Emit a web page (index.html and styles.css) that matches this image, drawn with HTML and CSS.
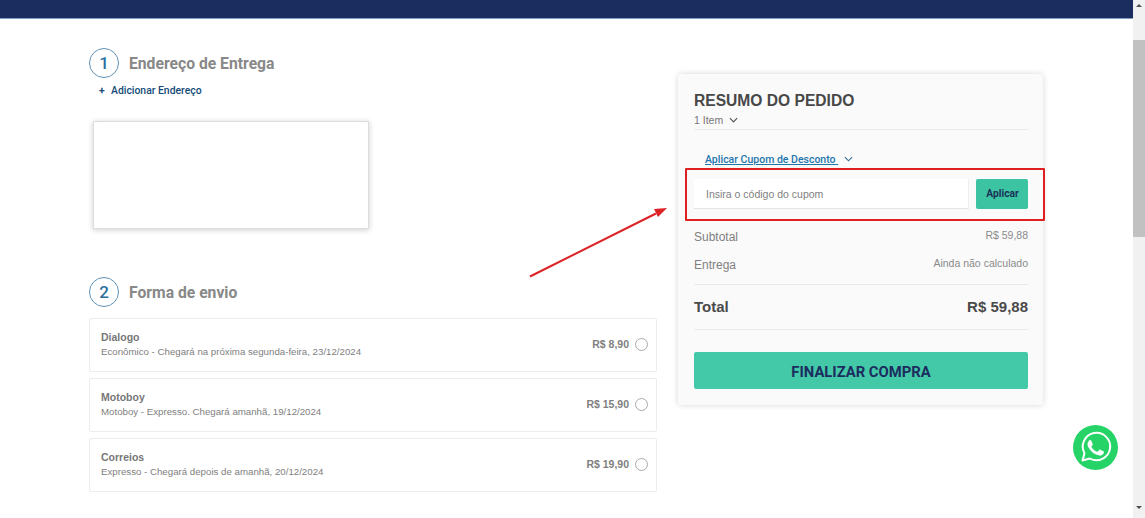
FILE: index.html
```html
<!DOCTYPE html>
<html lang="pt-BR">
<head>
<meta charset="utf-8">
<title>Checkout</title>
<link rel="stylesheet" href="styles.css">
</head>
<body>
<div class="page">
  <div class="content">
    <header class="topbar"></header>
    <div class="columns">
      <main class="left">
        <section class="step step-address">
          <div class="step-head"><span class="step-num">1</span><h2 class="step-title">Endereço de Entrega</h2></div>
          <a class="add-link"><span class="plus">+</span>Adicionar Endereço</a>
          <div class="address-box"></div>
        </section>
        <section class="step">
          <div class="step-head"><span class="step-num">2</span><h2 class="step-title">Forma de envio</h2></div>
          <div class="options">
            <div class="option">
              <div class="opt-info"><div class="opt-name">Dialogo</div><div class="opt-desc">Econômico - Chegará na próxima segunda-feira, 23/12/2024</div></div>
              <div class="opt-price">R$ 8,90</div><span class="radio"></span>
            </div>
            <div class="option">
              <div class="opt-info"><div class="opt-name">Motoboy</div><div class="opt-desc">Motoboy - Expresso. Chegará amanhã, 19/12/2024</div></div>
              <div class="opt-price">R$ 15,90</div><span class="radio"></span>
            </div>
            <div class="option">
              <div class="opt-info"><div class="opt-name">Correios</div><div class="opt-desc">Expresso - Chegará depois de amanhã, 20/12/2024</div></div>
              <div class="opt-price">R$ 19,90</div><span class="radio"></span>
            </div>
          </div>
        </section>
      </main>
      <aside class="card">
        <h2 class="card-title">RESUMO DO PEDIDO</h2>
        <div class="items">1 Item
          <svg class="chev" width="9" height="6" viewBox="0 0 10 6"><path d="M1 1l4 4 4-4" fill="none" stroke="#555" stroke-width="1.300"/></svg>
        </div>
        <div class="coupon-toggle"><a class="coupon-link">Aplicar Cupom de Desconto&nbsp;</a>
          <svg class="chev" width="9" height="6" viewBox="0 0 10 6"><path d="M1 1l4 4 4-4" fill="none" stroke="#2b6c94" stroke-width="1.200"/></svg>
        </div>
        <div class="coupon-row">
          <div class="coupon-input">Insira o código do cupom</div>
          <button class="coupon-btn">Aplicar</button>
        </div>
        <div class="row row-sub"><span class="row-label">Subtotal</span><span class="row-value">R$ 59,88</span></div>
        <div class="row row-ship"><span class="row-label">Entrega</span><span class="row-value">Ainda não calculado</span></div>
        <div class="row-total"><span>Total</span><span>R$ 59,88</span></div>
        <button class="finish">FINALIZAR COMPRA</button>
      </aside>
    </div>
  </div>
  <div class="scrollbar">
    <span class="arrow-up"></span>
    <div class="thumb"></div>
    <span class="arrow-down"></span>
  </div>
</div>

<div class="red-box"></div>
<svg class="red-arrow" width="150" height="80" viewBox="0 0 150 80">
  <path d="M4 72.500L130 9.500" stroke="#dd2226" stroke-width="2" fill="none"/>
  <path d="M141 4L128 5L132 13Z" fill="#dd2226"/>
</svg>
<a class="whatsapp">
  <svg width="45" height="45" viewBox="0 0 45 45">
    <circle cx="22.500" cy="22.500" r="22.500" fill="#25d366"/>
    <path d="M9.500 35.500l2-7.300a13.700 13.700 0 1 1 5.300 5.300z" fill="none" stroke="#fff" stroke-width="2" stroke-linejoin="round"/>
    <path d="M17.700 14.800c-.5 0-1.200.2-1.800.9-.7.7-1.400 2-1.400 3.500 0 2 1.400 4 1.700 4.400.3.400 2.800 4.400 6.800 6 3.400 1.300 4 1 4.800 1 .8-.1 2.400-1 2.800-2 .3-.9.300-1.800.2-2-.1-.2-.4-.3-.8-.5l-2.900-1.400c-.4-.1-.7-.2-1 .2-.3.400-1.100 1.400-1.300 1.700-.3.300-.5.300-.9.100-.4-.2-1.700-.6-3.200-2-1.200-1-2-2.300-2.200-2.700-.2-.4 0-.6.200-.8l.6-.7c.2-.2.300-.4.400-.7.100-.3.100-.5 0-.7l-1.300-3.100c-.3-.8-.7-.7-1-.7z" fill="#fff"/>
  </svg>
</a>
</body>
</html>
```

FILE: styles.css
```css
* { box-sizing: border-box; }
html, body { margin: 0; padding: 0; height: 100%; overflow: hidden; background: #fff; }
body { font-family: "Liberation Sans", Arial, sans-serif; color: #777; position: relative; }
h2 { margin: 0; }
.page { display: flex; height: 518px; }
.content { flex: 1; min-width: 0; }
.topbar { height: 19px; background: #1b2c5e; border-bottom: 1px solid #7f9cc4; }
.columns { display: flex; padding-left: 89px; }
.left { width: 568px; padding-top: 29px; }
.step-address { height: 229px; }
.step-head { display: flex; align-items: center; gap: 10px; }
.step-num {
  width: 30px; height: 30px; border: 1px solid #5f93b6; border-radius: 50%;
  display: flex; align-items: center; justify-content: center;
  font: 500 17px Roboto, sans-serif; color: #2a6f9e;
}
.step-title { font: 700 15.700px Roboto, sans-serif; color: #888; }
.add-link { display: block; margin: 6px 0 0 10px; font: 500 10.400px/13px Roboto, sans-serif; color: #134b78; }
.plus { display: inline-block; width: 12px; font-weight: 700; }
.address-box {
  width: 276px; height: 108px; margin: 24px 0 0 4px;
  background: #fff; border: 1px solid #ddd; box-shadow: 0 1px 6px rgba(0,0,0,.2);
}
.options { display: flex; flex-direction: column; gap: 6px; margin-top: 11px; }
.option {
  height: 54px; display: flex; align-items: center; padding: 0 8px 2px 11px;
  border: 1px solid #ececec; border-radius: 2px; background: #fff;
}
.opt-info { flex: 1; }
.opt-name { font: 700 10.500px/14px "Liberation Sans", sans-serif; color: #777; }
.opt-desc { font: 400 9.700px/14px "Liberation Sans", sans-serif; color: #808080; margin-top: 1px; }
.opt-price { font: 700 10.500px "Liberation Sans", sans-serif; color: #808080; margin-right: 6px; }
.radio { width: 13px; height: 13px; border: 1.500px solid #aaa; border-radius: 50%; background: #fff; }
.card {
  width: 365px; height: 331px; margin: 55px 0 0 21px; padding: 18px 15px 0 16px;
  background: #fafafa; border-radius: 3px; box-shadow: 0 0 6px rgba(0,0,0,.16);
}
.card-title { font: 700 15.600px/18px "Liberation Sans", sans-serif; color: #484848; }
.items {
  font-size: 10.500px; line-height: 13px; color: #777; margin-top: 4px;
  height: 16px; border-bottom: 1px solid #eaeaea;
}
.chev { margin-left: 3px; vertical-align: 1px; }
.coupon-toggle { margin: 23px 0 0 11px; font: 500 10.500px/13px Roboto, sans-serif; height: 13px; }
.coupon-link { color: #1d76ad; text-decoration: underline; }
.coupon-row { display: flex; gap: 7px; margin-top: 13px; }
.coupon-input {
  width: 275px; height: 30px; padding-left: 12px; background: #fff;
  border-bottom: 1px solid #e4e4e4; border-right: 1px solid #eee;
  font-size: 10.500px; line-height: 31px; color: #808080;
}
.coupon-btn {
  width: 52px; height: 30px; border: 0; padding: 0 0 2px 1px; border-radius: 2px; background: #3cc3a1;
  font: 700 10.300px Roboto, sans-serif; color: #1b3358;
}
.row { display: flex; justify-content: space-between; }
.row-sub { margin-top: 20px; height: 14px; }
.row-ship { margin-top: 14px; height: 14px; }
.row-label { font-size: 12px; line-height: 16px; color: #808080; }
.row-value { font-size: 10.500px; line-height: 12px; color: #8a8a8a; }
.row-total {
  display: flex; justify-content: space-between; align-items: center;
  margin-top: 13px; height: 46px; padding-bottom: 2px; border-top: 1px solid #eaeaea; border-bottom: 1px solid #eaeaea;
  font-weight: 700; font-size: 15px; color: #4a4a4a;
}
.finish {
  display: block; width: 100%; height: 37px; margin-top: 22px; padding: 2px 0 0; border: 0; border-radius: 2px;
  background: #44c9a8; font: 700 14.800px Roboto, sans-serif; color: #1b2c5e;
}
.scrollbar { width: 12px; background: #f1f1f1; position: relative; display: flex; flex-direction: column; align-items: center; }
.arrow-up { margin-top: 4px; border: 3px solid transparent; border-top: 0; border-bottom: 3px solid #505050; }
.thumb { width: 12px; height: 197px; margin-top: 33px; background: #c1c1c1; }
.arrow-down { margin-top: auto; margin-bottom: 9px; border: 3px solid transparent; border-bottom: 0; border-top: 3px solid #505050; }
.red-box {
  position: absolute; left: 685px; top: 168px; width: 360px; height: 53px;
  border: 2px solid #df2020; border-radius: 1px;
}
.red-arrow { position: absolute; left: 526px; top: 204px; }
.whatsapp { position: absolute; left: 1073px; top: 425px; width: 45px; height: 45px; }
```
